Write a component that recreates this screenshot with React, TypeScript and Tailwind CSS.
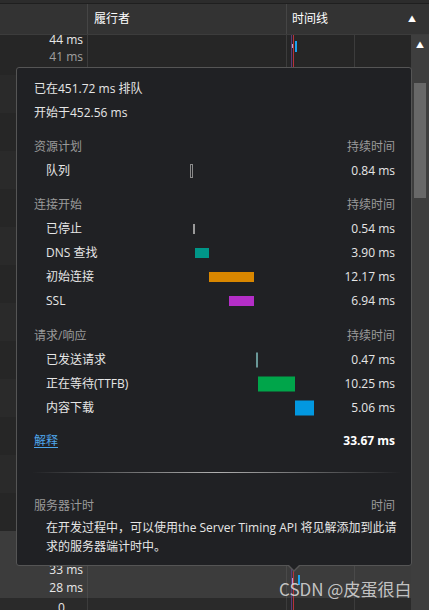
const font = "font-['Open_Sans','Noto_Sans_CJK_SC',sans-serif]";

type Bar = { left: number; width: number; height: number; color: string; outline?: boolean };
type Entry = { name: string; dur: string; bar: Bar };

const sections: { title: string; rows: Entry[] }[] = [
  {
    title: "资源计划",
    rows: [{ name: "队列", dur: "0.84 ms", bar: { left: 40, width: 3, height: 14, color: "#8a8a8a", outline: true } }],
  },
  {
    title: "连接开始",
    rows: [
      { name: "已停止", dur: "0.54 ms", bar: { left: 43, width: 2, height: 10, color: "#9a9a9a" } },
      { name: "DNS 查找", dur: "3.90 ms", bar: { left: 45, width: 14, height: 10, color: "#009688" } },
      { name: "初始连接", dur: "12.17 ms", bar: { left: 59, width: 45, height: 10, color: "#d98700" } },
      { name: "SSL", dur: "6.94 ms", bar: { left: 79, width: 25, height: 10, color: "#b42ec7" } },
    ],
  },
  {
    title: "请求/响应",
    rows: [
      { name: "已发送请求", dur: "0.47 ms", bar: { left: 106, width: 2, height: 15, color: "#6a9898" } },
      { name: "正在等待(TTFB)", dur: "10.25 ms", bar: { left: 108, width: 37, height: 15, color: "#00a54a" } },
      { name: "内容下载", dur: "5.06 ms", bar: { left: 145, width: 19, height: 15, color: "#0298e0" } },
    ],
  },
];

const rowBgs = ["#2a2a2a", "#262626"];

function BgRow({ h, bg, a, b }: { h: number; bg: string; a?: string; b?: string }) {
  return (
    <div className="flex" style={{ height: h, backgroundColor: bg }}>
      <div className="w-[88px] border-r border-[#3c3c3c] flex flex-col items-end pr-1 -mt-[4px] text-[12px] leading-[17px]">
        {a && <span className="text-[#e8e8e8]">{a}</span>}
        {b && <span className="text-[#a0a0a0]">{b}</span>}
      </div>
      <div className="w-[199px] border-r border-[#3c3c3c]" />
      <div className="w-[68px] border-r border-[#3c3c3c]" />
      <div className="flex-1" />
    </div>
  );
}

export default function App() {
  return (
    <div className={`relative h-[610px] w-[429px] overflow-hidden bg-[#262626] text-[#e6e6e6] ${font}`}>
      <div className="relative z-10 h-[4px] bg-[#2c2c2c] border-b border-[#1f1f1f]" />
      <div className="relative z-10 flex h-[31px] bg-[#333333] border-b border-[#3c3c3c] text-[12px] text-white">
        <div className="w-[88px] border-r border-[#454545]" />
        <div className="w-[199px] border-r border-[#454545] flex items-center pl-[6px]">履行者</div>
        <div className="flex-1 flex items-center justify-between pl-[5px] pr-[13px]">
          <span>时间线</span>
          <span className="text-[8px]">▲</span>
        </div>
      </div>

      <div className="flex">
        <div className="relative w-[411px]">
          <BgRow h={40} bg="#262626" a="44 ms" b="41 ms" />
          {Array.from({ length: 12 }).map((_, i) => (
            <BgRow key={i} h={38} bg={rowBgs[i % 2]} />
          ))}
          <div className="flex h-[67px] bg-[#3c3c3c]">
            <div className="w-[88px] border-r border-[#4a4a4a] flex flex-col items-end pr-1 pt-[30px] text-[12px] leading-[18px] text-[#e8e8e8]">
              <span>33 ms</span>
              <span>28 ms</span>
            </div>
            <div className="w-[199px] border-r border-[#4a4a4a]" />
            <div className="w-[68px] border-r border-[#4a4a4a]" />
            <div className="flex-1" />
          </div>
          <div className="flex h-[40px] bg-[#2a2a2a]">
            <div className="w-[88px] border-r border-[#3c3c3c] pl-[58px] pt-[1px] text-[12px] text-[#e8e8e8]">0</div>
            <div className="w-[199px] border-r border-[#3c3c3c]" />
            <div className="w-[68px] border-r border-[#3c3c3c]" />
          </div>

          {/* timeline markers */}
          <div className="absolute top-0 bottom-0 left-[291px] w-px bg-[#5a3a7a]" />
          <div className="absolute top-0 bottom-0 left-[293px] w-px bg-[#b8323a]" />
          <div className="absolute top-[9px] left-[292px] h-[4px] w-px bg-[#b0b0c8]" />
          <div className="absolute top-[6px] left-[295px] h-[11px] w-[2px] bg-[#1aa0f0]" />
          <div className="absolute top-[543px] left-[292px] h-[7px] w-px bg-[#b0a0c8]" />
          <div className="absolute top-[540px] left-[298px] h-[10px] w-[2px] bg-[#1aa0f0]" />
        </div>

        <div className="w-[18px] bg-[#3e3e3e] flex flex-col items-center">
          <span className="mt-[5px] text-[8px] leading-[10px] text-white">▲</span>
          <div className="mt-[33px] h-[115px] w-[12px] bg-[#686868]" />
        </div>
      </div>

      {/* popover */}
      <div className="absolute z-20 left-[16px] top-[67px] w-[396px] h-[499px] rounded-[3px] border border-[#555555] bg-[#202124] pl-[17px] pr-[16px] pt-[9px] text-[12px]">
        <div className="h-6 flex items-center">已在451.72 ms 排队</div>
        <div className="h-6 flex items-center">开始于452.56 ms</div>

        {sections.map((s, si) => (
          <div key={s.title} className={si === 2 ? "mt-[11px]" : "mt-[10px]"}>
            <div className="h-6 flex items-center justify-between text-[#9a9a9a]">
              <span>{s.title}</span>
              <span>持续时间</span>
            </div>
            {s.rows.map((r) => (
              <div key={r.name} className="h-6 flex items-center">
                <span className="w-[116px] pl-[12px] whitespace-nowrap">{r.name}</span>
                <div className="relative h-full w-[180px]">
                  <div
                    className={`absolute top-1/2 -translate-y-1/2 ${r.bar.outline ? "border border-[#8a8a8a] bg-[#202124]" : ""}`}
                    style={{
                      left: r.bar.left,
                      width: r.bar.width,
                      height: r.bar.height,
                      backgroundColor: r.bar.outline ? undefined : r.bar.color,
                    }}
                  />
                </div>
                <span className="flex-1 text-right">{r.dur}</span>
              </div>
            ))}
          </div>
        ))}

        <div className="mt-[9px] h-6 flex items-center justify-between">
          <span className="text-[#4ea6ea] underline underline-offset-2">解释</span>
          <span className="font-bold text-white">33.67 ms</span>
        </div>

        <div className="mt-[19px] -ml-[2px] -mr-[6px] h-px bg-gradient-to-r from-transparent via-[#b0b0b0] to-transparent" />

        <div className="mt-[21px] h-6 flex items-center justify-between text-[#9a9a9a]">
          <span>服务器计时</span>
          <span>时间</span>
        </div>
        <div className="pl-[12px] leading-[19px] whitespace-nowrap">
          <div>在开发过程中，可以使用the Server Timing API 将见解添加到此请</div>
          <div>求的服务器端计时中。</div>
        </div>
      </div>

      {/* pointer */}
      <div className="absolute z-20 left-[287px] top-[565px] h-0 w-0 border-x-[7px] border-t-[7px] border-x-transparent border-t-[#555555]" />
      <div className="absolute z-20 left-[288px] top-[564px] h-0 w-0 border-x-[6px] border-t-[6px] border-x-transparent border-t-[#202124]" />

      <div className="absolute z-30 left-[279px] top-[578px] text-[17px] leading-[21px] text-[#d6d6d6]/90 font-['Noto_Sans_CJK_SC',sans-serif]">
        CSDN @皮蛋很白
      </div>
    </div>
  );
}
